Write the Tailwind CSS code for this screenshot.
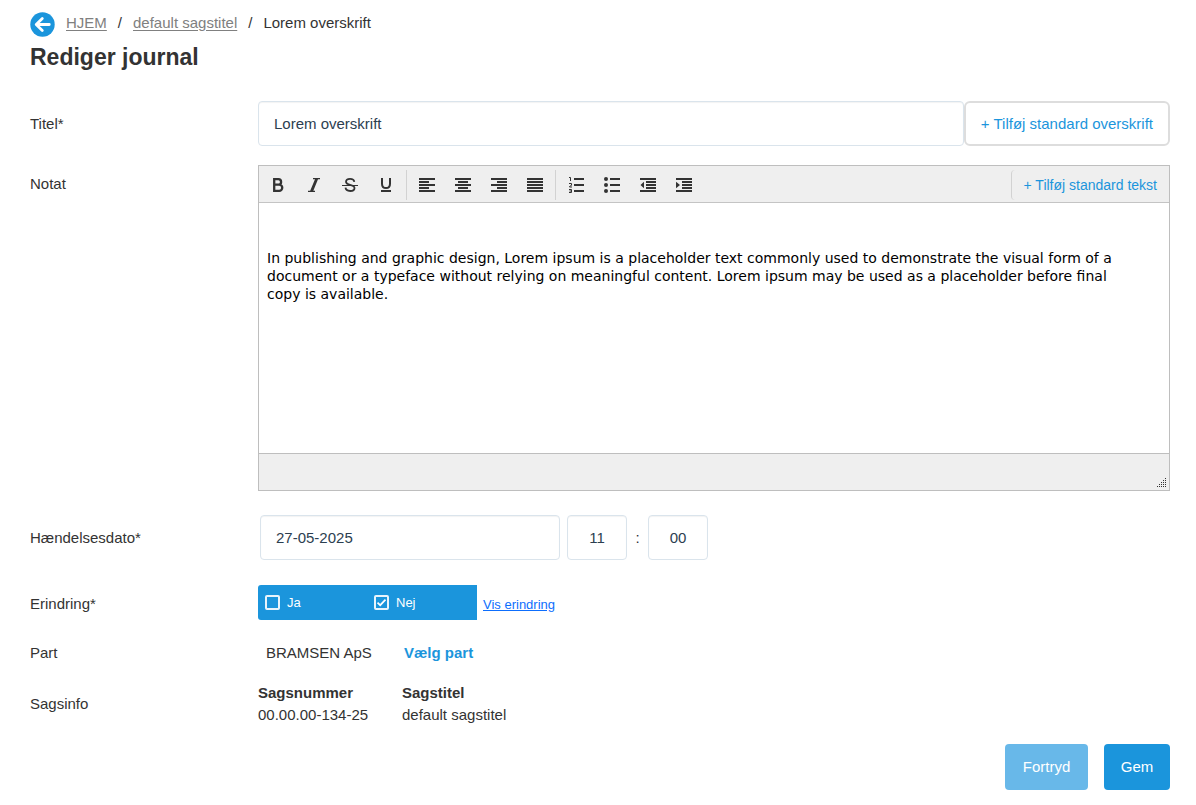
<!DOCTYPE html>
<html lang="da">
<head>
<meta charset="utf-8">
<meta name="viewport" content="width=device-width, initial-scale=1">
<title>Rediger journal</title>
<script src="https://cdn.jsdelivr.net/npm/@tailwindcss/browser@4"></script>
</head>
<body class="bg-white font-['Liberation_Sans',Arial,sans-serif] text-[15px] leading-[22px] text-[#333]">
<main class="pt-3 pr-[26px] pb-4 pl-[30px]">
  <nav aria-label="Brødkrumme" class="flex h-6 items-start">
    <a href="#" aria-label="Tilbage" class="mr-[11px] block">
      <svg class="size-[25px]" viewBox="0 0 25 25" fill="none"><circle cx="12.5" cy="12.5" r="12.2" fill="#1b95dc"/><path d="M19.3 12.5H6.8M12.3 6.4L6.2 12.5l6.1 6.1" stroke="#fff" stroke-width="2.8" stroke-linecap="round" stroke-linejoin="round"/></svg>
    </a>
    <ol class="flex">
      <li><a href="#" class="text-[#808080] underline underline-offset-2">HJEM</a><span class="mx-[11px]">/</span></li>
      <li><a href="#" class="text-[#808080] underline underline-offset-2">default sagstitel</a><span class="mx-[11px]">/</span></li>
      <li aria-current="page">Lorem overskrift</li>
    </ol>
  </nav>
  <h1 class="mt-[5px] text-[23px] leading-8 font-bold">Rediger journal</h1>

  <form>
    <div class="mt-7 flex items-center">
      <label for="titel" class="w-[228px] shrink-0">Titel*</label>
      <input id="titel" type="text" value="Lorem overskrift" class="h-[45px] min-w-0 flex-1 rounded border border-[#dae4ec] px-[15px] text-[#2c3e50] shadow-[inset_0_1px_1px_#0000000d]">
      <button type="button" class="h-[45px] shrink-0 rounded-md border-2 border-[#ddd] px-[15px] text-[#1b95dc]">+ Tilføj standard overskrift</button>
    </div>

    <div class="mt-[19px] flex items-start">
      <label for="notat" class="mt-2 w-[228px] shrink-0">Notat</label>
      <div class="min-w-0 flex-1 border border-[#bebebe]">
        <div class="flex h-[37px] items-start border-b border-[#c4c4c4] bg-[#efefef] pl-px text-[#333]">
          <button type="button" aria-label="Fed" class="flex h-9 w-9 items-center justify-center"><svg class="size-4" viewBox="0 0 16 16"><path fill="none" stroke="currentColor" stroke-width="2.300" d="M4.200 3.200H8.400a2.700 2.700 0 0 1 0 5.400H4.200M4.200 8.700H9.200a3 3 0 0 1 0 6.100H4.200M4.200 2.100v13.800"/></svg></button>
          <button type="button" aria-label="Kursiv" class="flex h-9 w-9 items-center justify-center"><svg class="size-4" viewBox="0 0 16 16"><path fill="currentColor" d="M7 2h7v1.300h-2L7.300 14.700H9V16H2v-1.300h2.200L9 3.300H7z"/></svg></button>
          <button type="button" aria-label="Gennemstreget" class="flex h-9 w-9 items-center justify-center"><svg class="size-4" viewBox="0 0 16 16" fill="none" stroke="currentColor"><path stroke-width="1.800" d="M12.300 5.800C12 3.700 10.400 2.800 8.100 2.800 5.600 2.800 4 3.900 4 5.800c0 1.700 1.300 2.500 4 3.100 3 .6 4.500 1.300 4.500 3.100 0 1.900-1.700 3-4.300 3-2.900 0-4.500-1.200-4.700-3.300"/><path d="M0 9.500h16"/></svg></button>
          <button type="button" aria-label="Understreget" class="flex h-9 w-9 items-center justify-center"><svg class="size-4" viewBox="0 0 16 16" fill="none" stroke="currentColor" stroke-width="2"><path d="M4 2v5.700c0 3 1.500 4.400 4 4.400s4-1.400 4-4.400V2M3 15h10"/></svg></button>
          <span class="mx-[2px] mt-1 h-[30px] w-px bg-[#d2d2d2]"></span>
          <button type="button" aria-label="Venstrestil" class="flex h-9 w-9 items-center justify-center"><svg class="size-4" viewBox="0 0 16 16"><path fill="currentColor" d="M0 2h16v2H0zM0 5h10v2H0zM0 8h16v2H0zM0 11h10v2H0zM0 14h16v2H0z"/></svg></button>
          <button type="button" aria-label="Centrer" class="flex h-9 w-9 items-center justify-center"><svg class="size-4" viewBox="0 0 16 16"><path fill="currentColor" d="M0 2h16v2H0zM3 5h10v2H3zM0 8h16v2H0zM3 11h10v2H3zM0 14h16v2H0z"/></svg></button>
          <button type="button" aria-label="Højrestil" class="flex h-9 w-9 items-center justify-center"><svg class="size-4" viewBox="0 0 16 16"><path fill="currentColor" d="M0 2h16v2H0zM6 5h10v2H6zM0 8h16v2H0zM6 11h10v2H6zM0 14h16v2H0z"/></svg></button>
          <button type="button" aria-label="Lige margener" class="flex h-9 w-9 items-center justify-center"><svg class="size-4" viewBox="0 0 16 16"><path fill="currentColor" d="M0 2h16v2H0zM0 5h16v2H0zM0 8h16v2H0zM0 11h16v2H0zM0 14h16v2H0z"/></svg></button>
          <span class="mx-[2px] mt-1 h-[30px] w-px bg-[#d2d2d2]"></span>
          <button type="button" aria-label="Nummereret liste" class="flex h-9 w-9 items-center justify-center"><svg class="size-4 overflow-visible" viewBox="0 0 16 16"><path fill="currentColor" d="M6 2h10v2H6zM6 8h10v2H6zM6 14h10v2H6z"/><path fill="none" stroke="currentColor" d="M1 1.500h1.500V5M1 7.500h2.500v1.800L1.500 10.500V11H4M1 13.500h2.500v3H1M1.500 15h2"/></svg></button>
          <button type="button" aria-label="Punktliste" class="flex h-9 w-9 items-center justify-center"><svg class="size-4 overflow-visible" viewBox="0 0 16 16" fill="currentColor"><path d="M6 2h10v2H6zM6 8h10v2H6zM6 14h10v2H6z"/><circle cx="2" cy="3" r="2"/><circle cx="2" cy="9" r="2"/><circle cx="2" cy="15" r="2"/></svg></button>
          <button type="button" aria-label="Formindsk indrykning" class="flex h-9 w-9 items-center justify-center"><svg class="size-4" viewBox="0 0 16 16"><path fill="currentColor" d="M0 2h16v2H0zM6 5h10v2H6zM6 8h10v2H6zM6 11h10v2H6zM0 14h16v2H0zM4 5.800v6.400L0.500 9z"/></svg></button>
          <button type="button" aria-label="Forøg indrykning" class="flex h-9 w-9 items-center justify-center"><svg class="size-4" viewBox="0 0 16 16"><path fill="currentColor" d="M0 2h16v2H0zM6 5h10v2H6zM6 8h10v2H6zM6 11h10v2H6zM0 14h16v2H0zM0 5.800v6.400L4 9z"/></svg></button>
          <button type="button" class="mt-1 ml-auto h-[30px] rounded-l-sm border-l border-[#d2d2d2] px-3 text-[14px] text-[#1b95dc]">+ Tilføj standard tekst</button>
        </div>
        <textarea id="notat" class="block h-[250px] w-full resize-none overflow-hidden pt-[46px] pr-[34px] pl-2 font-['DejaVu_Sans',Verdana,sans-serif] text-[14px] leading-[18px] text-black">In publishing and graphic design, Lorem ipsum is a placeholder text commonly used to demonstrate the visual form of a document or a typeface without relying on meaningful content. Lorem ipsum may be used as a placeholder before final copy is available.</textarea>
        <div class="flex h-[37px] items-end justify-end border-t border-[#bebebe] bg-[#efefef] pr-[3px] pb-[3px]">
          <svg class="h-[9px] w-[9px]" viewBox="0 0 9 9" fill="#333"><path d="M8 0h1v1H8zM6 2h1v1H6zM8 2h1v1H8zM4 4h1v1H4zM6 4h1v1H6zM8 4h1v1H8zM2 6h1v1H2zM4 6h1v1H4zM6 6h1v1H6zM8 6h1v1H8zM0 8h1v1H0zM2 8h1v1H2zM4 8h1v1H4zM6 8h1v1H6zM8 8h1v1H8z"/></svg>
        </div>
      </div>
    </div>

    <div class="mt-6 flex items-center">
      <label for="dato" class="w-[230px] shrink-0">Hændelsesdato*</label>
      <input id="dato" type="text" value="27-05-2025" class="h-[45px] w-[300px] rounded border border-[#dae4ec] px-[15px] text-[#2c3e50] shadow-[inset_0_1px_1px_#0000000d]">
      <input aria-label="Time" type="text" value="11" class="ml-[7px] h-[45px] w-[60px] rounded border border-[#dae4ec] text-center text-[#2c3e50] shadow-[inset_0_1px_1px_#0000000d]">
      <span class="w-[21px] text-center">:</span>
      <input aria-label="Minut" type="text" value="00" class="h-[45px] w-[60px] rounded border border-[#dae4ec] text-center text-[#2c3e50] shadow-[inset_0_1px_1px_#0000000d]">
    </div>

    <div class="mt-[25px] flex items-center">
      <span id="erindring" class="w-[228px] shrink-0 pt-[2px]">Erindring*</span>
      <div role="group" aria-labelledby="erindring" class="flex h-[35px] w-[219px] items-center rounded-l-[3px] bg-[#1b95dc] text-[13px] text-white">
        <label class="flex w-[109px] items-center pl-[7px]">
          <input type="checkbox" class="size-[15px] appearance-none rounded-[2px] border-2 border-white/90">
          <span class="ml-[7px]">Ja</span>
        </label>
        <label class="flex items-center pl-[7px]">
          <span class="grid size-[15px]">
            <input type="checkbox" checked class="peer col-start-1 row-start-1 size-[15px] appearance-none rounded-[2px] border-2 border-white/90">
            <svg class="pointer-events-none invisible col-start-1 row-start-1 size-[15px] peer-checked:visible" viewBox="0 0 15 15" fill="none" stroke="#fff" stroke-width="1.700"><path d="M3.500 7.600l2.700 2.600 5.300-5.600"/></svg>
          </span>
          <span class="ml-[7px]">Nej</span>
        </label>
      </div>
      <a href="#" class="ml-[6px] pt-1 text-[13px] text-[#0d6efd] underline">Vis erindring</a>
    </div>

    <div class="mt-[22px] flex">
      <span class="w-[236px] shrink-0">Part</span>
      <span class="w-[138px]">BRAMSEN ApS</span>
      <a href="#" class="font-bold text-[#1b95dc]">Vælg part</a>
    </div>

    <div class="mt-[18px] flex items-center">
      <span class="w-[228px] shrink-0">Sagsinfo</span>
      <dl class="flex">
        <div class="w-36"><dt class="font-bold">Sagsnummer</dt><dd>00.00.00-134-25</dd></div>
        <div><dt class="font-bold">Sagstitel</dt><dd>default sagstitel</dd></div>
      </dl>
    </div>

    <div class="mt-[18px] flex justify-end gap-4">
      <button type="button" class="h-[46px] w-[83px] rounded bg-[#68b8e9] text-white">Fortryd</button>
      <button type="submit" class="h-[46px] w-[66px] rounded bg-[#1b95dc] text-white">Gem</button>
    </div>
  </form>
</main>
</body>
</html>
